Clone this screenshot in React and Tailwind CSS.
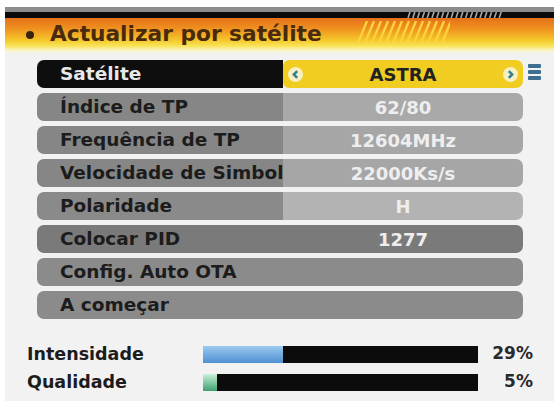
const ROWS = [
  { label: 'Índice de TP', value: '62/80', left: 'bg-[#868686]', right: 'bg-[#a9a9a9]' },
  { label: 'Frequência de TP', value: '12604MHz', left: 'bg-[#868686]', right: 'bg-[#a6a6a6]' },
  { label: 'Velocidade de Simbol', value: '22000Ks/s', left: 'bg-[#868686]', right: 'bg-[#a6a6a6]' },
  { label: 'Polaridade', value: 'H', left: 'bg-[#8a8a8a]', right: 'bg-[#b3b3b3]' },
  { label: 'Colocar PID', value: '1277', left: 'bg-[#7a7a7a]', right: 'bg-[#7a7a7a]' },
  { label: 'Config. Auto OTA', value: '', left: 'bg-[#8b8b8b]', right: 'bg-[#8b8b8b]' },
  { label: 'A começar', value: '', left: 'bg-[#8b8b8b]', right: 'bg-[#8b8b8b]' },
]

function Stripes() {
  // yellow diagonal hatching on the orange title bar
  const lines = []
  for (let i = 0; i < 13; i++) {
    const x = 8 + i * 7
    lines.push(<line key={i} x1={x} y1="22" x2={x + 9} y2="0" stroke="#f9d43a" strokeWidth="2.4" />)
  }
  return (
    <svg width="100" height="22" className="absolute left-[345px] top-[3px]">
      {lines}
    </svg>
  )
}

function Dashes() {
  const lines = []
  for (let i = 0; i < 20; i++) {
    const x = 3 + i * 4.8
    lines.push(<line key={i} x1={x} y1="6" x2={x + 2} y2="0" stroke="#a8a8a8" strokeWidth="1.6" />)
  }
  return (
    <svg width="100" height="6" className="absolute left-[400px] top-0">
      {lines}
    </svg>
  )
}

function Arrow({ dir }) {
  return (
    <span className="flex h-[15px] w-[15px] items-center justify-center rounded-full bg-[#f8f0c0]">
      <svg width="9" height="9" viewBox="0 0 8 8">
        <path
          d={dir === 'left' ? 'M5.5 1 L2.5 4 L5.5 7' : 'M2.5 1 L5.5 4 L2.5 7'}
          fill="none"
          stroke="#2f7f9a"
          strokeWidth="2.2"
        />
      </svg>
    </span>
  )
}

function Row({ label, value, left, right }) {
  return (
    <div className="flex h-[28px] overflow-hidden rounded-[7px]">
      <div className={`flex w-[246px] items-center overflow-hidden whitespace-nowrap pl-[23px] text-[18.5px] font-bold text-[#1c1c1c] ${left}`}>
        {label}
      </div>
      <div className={`flex flex-1 items-center justify-center text-[18px] font-bold text-[#eeeeee] ${right}`}>
        {value}
      </div>
    </div>
  )
}

function Meter({ label, pct, fill }) {
  return (
    <div className="flex h-[28px] items-center">
      <div className="w-[198px] pl-[22px] text-[17.5px] font-bold text-[#1c1c1c]">{label}</div>
      <div className="h-[17px] w-[275px] bg-[#0c0c0c]">
        <div className={`h-full ${fill}`} style={{ width: `${pct}%` }} />
      </div>
      <div className="w-[55px] text-right text-[17px] font-bold text-[#2a2a2a]">{pct}%</div>
    </div>
  )
}

export default function App() {
  return (
    <div className="h-[401px] w-[554px] overflow-hidden bg-white pl-[5px] pt-[7px] font-['DejaVu_Sans',sans-serif]">
      <div className="h-[5px] bg-[#8c8c8c]" />
      <div className="relative h-[6px] bg-[#0a0a0a]">
        <Dashes />
      </div>
      <div className="relative flex h-[36px] items-center bg-[linear-gradient(180deg,#e5701a_0%,#ef921f_30%,#f5c82a_62%,#f8e45a_78%,#fbf4c8_90%,#f2f2f2_100%)]">
        <span className="ml-[21px] -mt-[3px] h-[8px] w-[8px] rounded-full bg-[#3a2410]" />
        <span className="ml-[16px] -mt-[4px] text-[21.7px] font-bold text-[#4a2a0c]">
          Actualizar por satélite
        </span>
        <Stripes />
      </div>

      <div className="h-[347px] bg-[#f2f2f2] pt-[6px]">
        <div className="flex items-start">
          <div className="ml-[32px] flex w-[486px] flex-col gap-[5px]">
            <div className="flex h-[28px] overflow-hidden rounded-[7px]">
              <div className="flex w-[246px] items-center bg-[#0e0e0e] pl-[23px] text-[18.5px] font-bold text-[#e8e8e8]">
                Satélite
              </div>
              <div className="flex flex-1 items-center justify-between rounded-l-[6px] bg-[#f1cd22] px-[5px]">
                <Arrow dir="left" />
                <span className="text-[18px] font-bold text-[#222]">ASTRA</span>
                <Arrow dir="right" />
              </div>
            </div>
            {ROWS.map((r) => (
              <Row key={r.label} {...r} />
            ))}
          </div>
          <div className="ml-[5px] mt-[4px] flex flex-col gap-[2px]">
            <div className="h-[4px] w-[13px] rounded-[1px] bg-[#3d6f90]" />
            <div className="h-[4px] w-[13px] rounded-[1px] bg-[#3d6f90]" />
            <div className="h-[4px] w-[13px] rounded-[1px] bg-[#3d6f90]" />
          </div>
        </div>

        <div className="mt-[21px] flex flex-col">
          <Meter label="Intensidade" pct={29} fill="bg-[linear-gradient(180deg,#9ccaf0,#4f8fd0)]" />
          <Meter label="Qualidade" pct={5} fill="bg-[linear-gradient(180deg,#c8f0d8,#3fa070)]" />
        </div>
      </div>
    </div>
  )
}
